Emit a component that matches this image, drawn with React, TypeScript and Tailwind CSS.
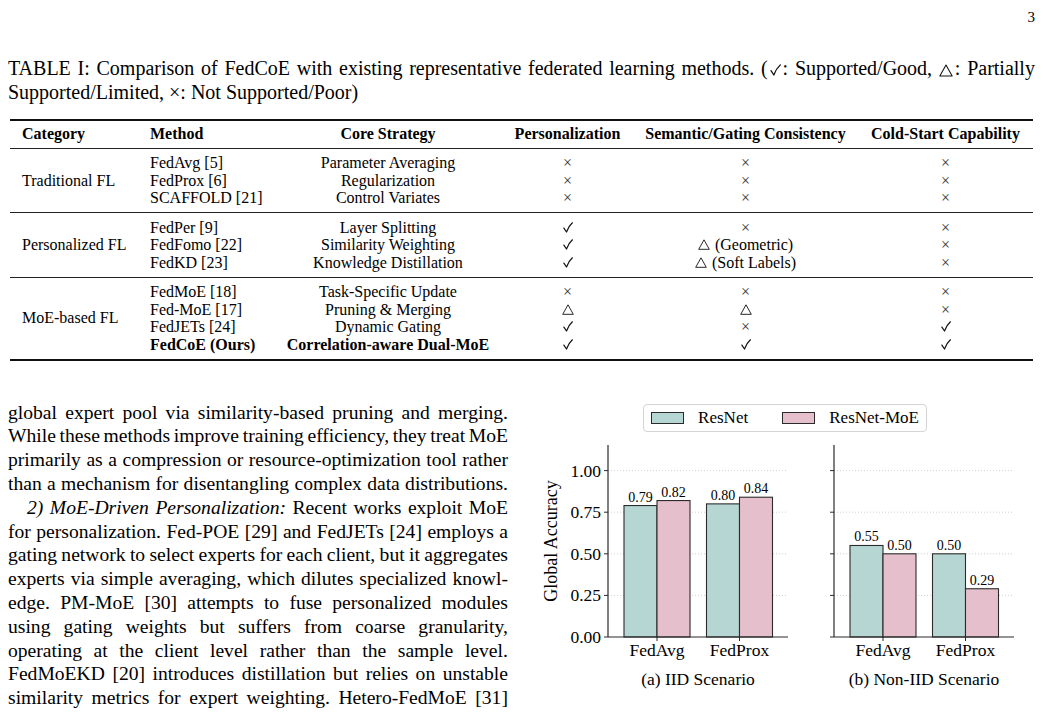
import type { ReactNode } from "react";

// 표 기호
const Check = ({ w = 10 }: { w?: number }) => (
  <svg width={w} height={w * 1.1} viewBox="0 0 10 11" className="inline-block">
    <path d="M0.9 6.1 L3.5 10 Q5.4 4.4 9.4 0.8" fill="none" stroke="#111" strokeWidth={1.2} strokeLinecap="round" strokeLinejoin="round" />
  </svg>
);

const Tri = ({ w = 12 }: { w?: number }) => (
  <svg width={w} height={w * 0.92} viewBox="0 0 12 11" className="inline-block">
    <path d="M6 0.8 L11.3 10.3 L0.7 10.3 Z" fill="none" stroke="#111" strokeWidth={0.9} strokeLinejoin="round" />
  </svg>
);

const Mark = ({ v }: { v: string }) => {
  if (v === "x") return <span className="text-[#333]">×</span>;
  if (v === "c") return <Check />;
  if (v === "t") return <Tri />;
  // "t:라벨"
  return (
    <span className="flex items-center gap-[5px]">
      <Tri />
      <span>{v.slice(2)}</span>
    </span>
  );
};

const groups = [
  {
    cat: "Traditional FL",
    rows: [
      ["FedAvg [5]", "Parameter Averaging", "x", "x", "x"],
      ["FedProx [6]", "Regularization", "x", "x", "x"],
      ["SCAFFOLD [21]", "Control Variates", "x", "x", "x"],
    ],
  },
  {
    cat: "Personalized FL",
    rows: [
      ["FedPer [9]", "Layer Splitting", "c", "x", "x"],
      ["FedFomo [22]", "Similarity Weighting", "c", "t:(Geometric)", "x"],
      ["FedKD [23]", "Knowledge Distillation", "c", "t:(Soft Labels)", "x"],
    ],
  },
  {
    cat: "MoE-based FL",
    rows: [
      ["FedMoE [18]", "Task-Specific Update", "x", "x", "x"],
      ["Fed-MoE [17]", "Pruning & Merging", "t", "t", "x"],
      ["FedJETs [24]", "Dynamic Gating", "c", "x", "c"],
      ["FedCoE (Ours)", "Correlation-aware Dual-MoE", "c", "c", "c"],
    ],
  },
];

const cols = "grid grid-cols-[128px_136px_228px_131px_225px_175px]";

// 양쪽 정렬 한 줄 (단어 사이 간격을 균등하게)
const JLine = ({ words, indent = false }: { words: ReactNode[]; indent?: boolean }) => (
  <div className={`flex justify-between ${indent ? "pl-[19px]" : ""}`}>
    {words.map((w, i) => (
      <span key={i} className="whitespace-nowrap">
        {w}
      </span>
    ))}
  </div>
);

const bodyLines = [
  "global expert pool via similarity-based pruning and merging.",
  "While these methods improve training efficiency, they treat MoE",
  "primarily as a compression or resource-optimization tool rather",
  "than a mechanism for disentangling complex data distributions.",
  "",
  "for personalization. Fed-POE [29] and FedJETs [24] employs a",
  "gating network to select experts for each client, but it aggregates",
  "experts via simple averaging, which dilutes specialized knowl-",
  "edge. PM-MoE [30] attempts to fuse personalized modules",
  "using gating weights but suffers from coarse granularity,",
  "operating at the client level rather than the sample level.",
  "FedMoEKD [20] introduces distillation but relies on unstable",
  "similarity metrics for expert weighting. Hetero-FedMoE [31]",
];

// 차트
const Y0 = 197;
const SCALE = 166.4;
const yOf = (v: number) => Y0 - v * SCALE;
const TEAL = "#b5d6d3";
const PINK = "#e6bfcd";

interface IPanelProps {
  width: number;
  axisX: number;
  data: { name: string; a: number; b: number }[];
  yLabels?: boolean;
}

function Panel({ width, axisX, data, yLabels }: IPanelProps) {
  const right = axisX + 180;
  const centers = [axisX + 49, axisX + 131.5];
  const ticks = [0, 0.25, 0.5, 0.75, 1];
  return (
    <svg width={width} height={225} className="block">
      {ticks.slice(1).map((t) => (
        <line key={t} x1={axisX} x2={right} y1={yOf(t)} y2={yOf(t)} stroke="#c4c4c4" strokeWidth={0.8} strokeDasharray="1 2" />
      ))}
      {data.map((d, i) => {
        const cx = centers[i];
        return (
          <g key={d.name}>
            <rect x={cx - 33} y={yOf(d.a)} width={33} height={d.a * SCALE} fill={TEAL} stroke="#2b2b2b" strokeWidth={1.1} />
            <rect x={cx} y={yOf(d.b)} width={33} height={d.b * SCALE} fill={PINK} stroke="#2b2b2b" strokeWidth={1.1} />
            <text x={cx - 16.5} y={yOf(d.a) - 4} textAnchor="middle" fontSize={14}>
              {d.a.toFixed(2)}
            </text>
            <text x={cx + 16.5} y={yOf(d.b) - 4} textAnchor="middle" fontSize={14}>
              {d.b.toFixed(2)}
            </text>
            <line x1={cx} x2={cx} y1={Y0} y2={Y0 + 4} stroke="#2b2b2b" strokeWidth={1} />
            <text x={cx} y={216} textAnchor="middle" fontSize={17.5}>
              {d.name}
            </text>
          </g>
        );
      })}
      <line x1={axisX} x2={axisX} y1={5} y2={Y0} stroke="#2b2b2b" strokeWidth={1.2} />
      <line x1={axisX} x2={right} y1={Y0} y2={Y0} stroke="#2b2b2b" strokeWidth={1.2} />
      {ticks.map((t) => (
        <g key={t}>
          <line x1={axisX - 4} x2={axisX} y1={yOf(t)} y2={yOf(t)} stroke="#2b2b2b" strokeWidth={1} />
          {yLabels && (
            <text x={axisX - 7} y={yOf(t) + 6} textAnchor="end" fontSize={17.5}>
              {t.toFixed(2)}
            </text>
          )}
        </g>
      ))}
      {yLabels && (
        <text transform="translate(27,101) rotate(-90)" textAnchor="middle" fontSize={18}>
          Global Accuracy
        </text>
      )}
    </svg>
  );
}

export default function App() {
  return (
    <div className="w-[1043px] h-[713px] overflow-hidden bg-white text-black [font-family:'Liberation_Serif','Times_New_Roman',serif]">
      {/* 페이지 번호 */}
      <div className="flex justify-end pr-[8px] pt-[7px] text-[15px] leading-[20px]">3</div>

      {/* 표 캡션 */}
      <div className="mt-[30px] px-[8px] text-[20px] leading-[23.8px]">
        <JLine
          words={[
            "TABLE",
            "I:",
            "Comparison",
            "of",
            "FedCoE",
            "with",
            "existing",
            "representative",
            "federated",
            "learning",
            "methods.",
            <span className="inline-flex items-center">
              (<span className="mx-[2px]"><Check w={11} /></span>:
            </span>,
            "Supported/Good,",
            <span className="inline-flex items-center">
              <span className="mr-[2px]"><Tri w={14} /></span>:
            </span>,
            "Partially",
          ]}
        />
        <div>Supported/Limited, ×: Not Supported/Poor)</div>
      </div>

      {/* 표 */}
      <div className="mt-[14px] ml-[10px] w-[1023px] text-[16px]">
        <div className="h-[2px] bg-[#111]" />
        <div className={`${cols} h-[27px] items-center font-bold`}>
          <div className="pl-[12px]">Category</div>
          <div className="pl-[12px]">Method</div>
          <div className="text-center">Core Strategy</div>
          <div className="text-center">Personalization</div>
          <div className="text-center">Semantic/Gating Consistency</div>
          <div className="text-center">Cold-Start Capability</div>
        </div>
        {groups.map((g, gi) => (
          <div key={g.cat}>
            <div className="h-[1px] bg-[#222]" />
            <div className={`${cols} py-[5.5px] leading-[17.5px]`}>
              <div className={`pl-[12px] self-center ${g.rows.length === 4 ? "row-span-4" : "row-span-3"}`}>{g.cat}</div>
              {g.rows.map((r, ri) => {
                const bold = gi === 2 && ri === 3;
                return [
                  <div key={`${ri}m`} className={`pl-[12px] h-[17.5px] ${bold ? "font-bold" : ""}`}>
                    {r[0]}
                  </div>,
                  <div key={`${ri}s`} className={`text-center h-[17.5px] ${bold ? "font-bold" : ""}`}>
                    {r[1]}
                  </div>,
                  ...r.slice(2).map((v, vi) => (
                    <div key={`${ri}${vi}`} className="flex justify-center items-center h-[17.5px]">
                      <Mark v={v} />
                    </div>
                  )),
                ];
              })}
            </div>
          </div>
        ))}
        <div className="h-[2px] bg-[#111]" />
      </div>

      {/* 본문 + 그림 */}
      <div className="mt-[40px] flex pl-[8px]">
        <div className="w-[500px] text-[19.6px] leading-[23.8px]">
          {bodyLines.map((line, i) =>
            i === 4 ? (
              <JLine
                key={i}
                indent
                words={[
                  <i>2)</i>,
                  <i>MoE-Driven</i>,
                  <i>Personalization:</i>,
                  "Recent",
                  "works",
                  "exploit",
                  "MoE",
                ]}
              />
            ) : (
              <JLine key={i} words={line.split(" ")} />
            )
          )}
        </div>

        <div className="ml-[22px] pt-[3px] flex flex-col">
          {/* 범례 */}
          <div className="ml-[113px] w-[284px] h-[28px] flex items-center px-[7px] border border-[#d4d4d4] rounded-[4px] text-[17px] whitespace-nowrap">
            <span className="w-[34px] h-[12px] border border-[#2b2b2b] bg-[#b5d6d3]" />
            <span className="ml-[14px]">ResNet</span>
            <span className="ml-[34px] w-[34px] h-[12px] border border-[#2b2b2b] bg-[#e6bfcd]" />
            <span className="ml-[14px]">ResNet-MoE</span>
          </div>

          <div className="mt-[8px] flex">
            <div className="flex flex-col">
              <Panel
                width={270}
                axisX={78}
                yLabels
                data={[
                  { name: "FedAvg", a: 0.79, b: 0.82 },
                  { name: "FedProx", a: 0.8, b: 0.84 },
                ]}
              />
              <div className="pl-[66px] mt-[4px] text-center text-[17.5px] leading-[20px]">(a) IID Scenario</div>
            </div>
            <div className="flex flex-col">
              <Panel
                width={230}
                axisX={34}
                data={[
                  { name: "FedAvg", a: 0.55, b: 0.5 },
                  { name: "FedProx", a: 0.5, b: 0.29 },
                ]}
              />
              <div className="pl-[18px] mt-[4px] text-center text-[17.5px] leading-[20px]">(b) Non-IID Scenario</div>
            </div>
          </div>
        </div>
      </div>
    </div>
  );
}
